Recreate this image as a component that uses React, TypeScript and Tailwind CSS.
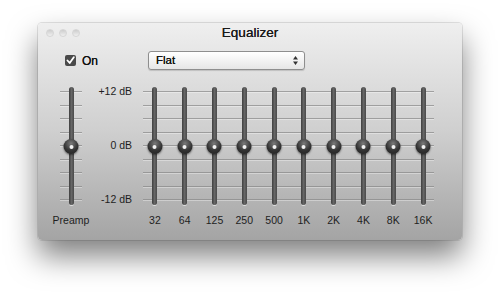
import React from 'react'

const bands = ['32', '64', '125', '250', '500', '1K', '2K', '4K', '8K', '16K']
const font = { fontFamily: '"Liberation Sans", Arial, sans-serif' }

function TickLines({ className }: { className: string }) {
  return (
    <div className={`absolute top-[4px] h-[109px] flex flex-col justify-between ${className}`}>
      {[...Array(9)].map((_, i) => (
        <div key={i} className="h-px bg-[#878787]/70 shadow-[0_1px_0_rgba(255,255,255,0.35)]" />
      ))}
    </div>
  )
}

function Slider() {
  return (
    <div className="relative h-[119px] w-full flex justify-center">
      <div className="w-[5px] h-[118px] rounded-full bg-gradient-to-r from-[#3f3f3f] via-[#666] to-[#4a4a4a] shadow-[0_1px_0_rgba(255,255,255,0.6)]" />
      <div className="absolute top-[52px] left-1/2 -translate-x-1/2 w-[15px] h-[15px] rounded-full bg-[radial-gradient(circle_at_50%_30%,#7a7a7a,#333_55%,#1e1e1e)] shadow-[0_1px_2px_rgba(0,0,0,0.5)] flex items-center justify-center">
        <div className="w-[4px] h-[4px] rounded-full bg-[#f2f2f2]" />
      </div>
    </div>
  )
}

export default function App() {
  return (
    <div className="w-[500px] h-[293px] bg-white pt-[23px] pl-[38px]" style={font}>
      <div className="w-[424px] h-[217px] rounded-[4px] bg-gradient-to-b from-[#efefef] via-[#cfcfcf] to-[#a4a4a4] shadow-[0_16px_30px_rgba(0,0,0,0.5),0_0_0_1px_rgba(0,0,0,0.1)] flex flex-col">
        {/* Title bar */}
        <div className="h-[22px] grid grid-cols-[1fr_auto_1fr] items-center">
          <div className="flex items-center gap-[5px] pl-[8px] pb-[2px]">
            {[0, 1, 2].map(i => (
              <div key={i} className="w-[8px] h-[8px] rounded-full bg-gradient-to-b from-[#cdcdcd] to-[#f0f0f0] border border-[#d6d6d6]" />
            ))}
          </div>
          <div className="text-[13.5px] text-[#1a1a1a] pb-[1px] [text-shadow:0_0_0.3px_#1a1a1a]">Equalizer</div>
          <div />
        </div>

        {/* Controls row */}
        <div className="mt-[6px] h-[19px] flex items-center">
          <div className="ml-[27px] flex items-center gap-[6px] w-[83px]">
            <div className="w-[11px] h-[11px] rounded-[2px] bg-[#4a4a4a] flex items-center justify-center">
              <svg width="9" height="9" viewBox="0 0 9 9">
                <path d="M1.5 4.5 L3.7 7 L7.8 1.2" stroke="#fff" strokeWidth="1.8" fill="none" strokeLinecap="round" strokeLinejoin="round" />
              </svg>
            </div>
            <span className="text-[12px] text-[#111] [text-shadow:0_0_0.3px_#111]">On</span>
          </div>
          <div className="w-[157px] h-[19px] rounded-[3px] border border-[#8e8e8e] bg-gradient-to-b from-white to-[#e6e6e6] shadow-[0_1px_1px_rgba(0,0,0,0.15)] flex items-center justify-between pl-[7px] pr-[5px]">
            <span className="text-[11.5px] text-[#111] [text-shadow:0_0_0.3px_#111]">Flat</span>
            <svg width="7" height="11" viewBox="0 0 7 11">
              <path d="M3.5 1 L6 4.5 L1 4.5 Z M3.5 10 L6 6.5 L1 6.5 Z" fill="#333" />
            </svg>
          </div>
        </div>

        {/* Sliders */}
        <div className="mt-[17px] flex">
          <div className="ml-[15px] w-[36px] relative">
            <TickLines className="left-[7px] right-[7px]" />
            <Slider />
          </div>
          <div className="w-[43px] h-[120px] -mt-[2px] flex flex-col justify-between items-end text-[10.5px] leading-[12px] text-[#1e1e1e]">
            <span>+12 dB</span>
            <span>0 dB</span>
            <span>-12 dB</span>
          </div>
          <div className="ml-[8px] relative flex">
            <TickLines className="left-[3px] right-[4px]" />
            {bands.map(b => (
              <div key={b} className="w-[29.8px]">
                <Slider />
              </div>
            ))}
          </div>
        </div>

        {/* Labels */}
        <div className="mt-[8px] flex text-[10.5px] leading-[12px] text-[#1e1e1e]">
          <div className="ml-[12px] w-[42px] text-center">Preamp</div>
          <div className="w-[45px]" />
          <div className="ml-[3px] flex">
            {bands.map(b => (
              <div key={b} className="w-[29.8px] text-center">{b}</div>
            ))}
          </div>
        </div>
      </div>
    </div>
  )
}
